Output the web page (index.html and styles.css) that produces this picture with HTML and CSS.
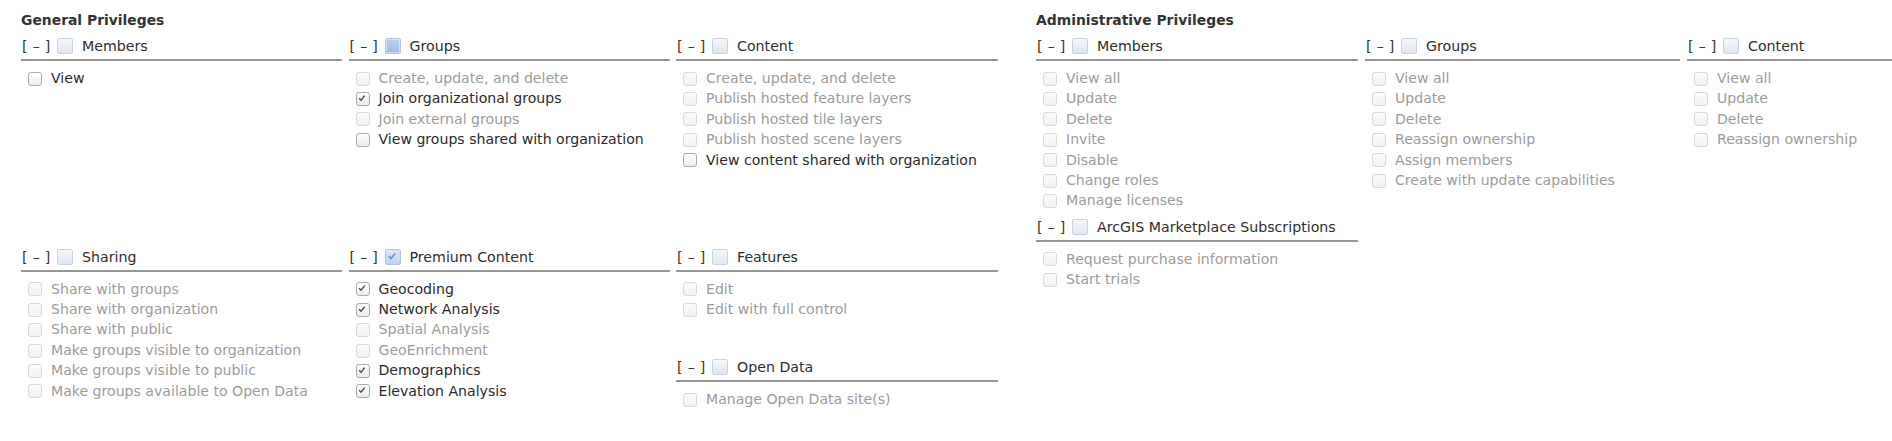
FILE: index.html
```html
<!DOCTYPE html>
<html>
<head>
<meta charset="utf-8">
<link rel="stylesheet" href="styles.css">
</head>
<body>
<div class="page">
  <div class="panel">
    <div class="panel-title">General Privileges</div>
    <div class="grid grid-general">
      <div class="section">
        <div class="sec-head"><span class="toggle">[ – ]</span><span class="hcb"></span><span class="sec-label">Members</span></div>
        <ul class="items">
          <li><span class="cb"></span>View</li>
        </ul>
      </div>
      <div class="section">
        <div class="sec-head"><span class="toggle">[ – ]</span><span class="hcb mixed"></span><span class="sec-label">Groups</span></div>
        <ul class="items">
          <li class="dis"><span class="cb"></span>Create, update, and delete</li>
          <li><span class="cb on"><svg viewBox="0 0 14 14"><path d="M3.6 7.2 L5.9 9.6 L10.2 4.2"/></svg></span>Join organizational groups</li>
          <li class="dis"><span class="cb"></span>Join external groups</li>
          <li><span class="cb"></span>View groups shared with organization</li>
        </ul>
      </div>
      <div class="section">
        <div class="sec-head"><span class="toggle">[ – ]</span><span class="hcb"></span><span class="sec-label">Content</span></div>
        <ul class="items">
          <li class="dis"><span class="cb"></span>Create, update, and delete</li>
          <li class="dis"><span class="cb"></span>Publish hosted feature layers</li>
          <li class="dis"><span class="cb"></span>Publish hosted tile layers</li>
          <li class="dis"><span class="cb"></span>Publish hosted scene layers</li>
          <li><span class="cb"></span>View content shared with organization</li>
        </ul>
      </div>
      <div class="section">
        <div class="sec-head"><span class="toggle">[ – ]</span><span class="hcb"></span><span class="sec-label">Sharing</span></div>
        <ul class="items">
          <li class="dis"><span class="cb"></span>Share with groups</li>
          <li class="dis"><span class="cb"></span>Share with organization</li>
          <li class="dis"><span class="cb"></span>Share with public</li>
          <li class="dis"><span class="cb"></span>Make groups visible to organization</li>
          <li class="dis"><span class="cb"></span>Make groups visible to public</li>
          <li class="dis"><span class="cb"></span>Make groups available to Open Data</li>
        </ul>
      </div>
      <div class="section">
        <div class="sec-head"><span class="toggle">[ – ]</span><span class="hcb on"><svg viewBox="0 0 16 16"><path d="M4.2 8.2 L6.9 10.9 L11.6 5"/></svg></span><span class="sec-label">Premium Content</span></div>
        <ul class="items">
          <li><span class="cb on"><svg viewBox="0 0 14 14"><path d="M3.6 7.2 L5.9 9.6 L10.2 4.2"/></svg></span>Geocoding</li>
          <li><span class="cb on"><svg viewBox="0 0 14 14"><path d="M3.6 7.2 L5.9 9.6 L10.2 4.2"/></svg></span>Network Analysis</li>
          <li class="dis"><span class="cb"></span>Spatial Analysis</li>
          <li class="dis"><span class="cb"></span>GeoEnrichment</li>
          <li><span class="cb on"><svg viewBox="0 0 14 14"><path d="M3.6 7.2 L5.9 9.6 L10.2 4.2"/></svg></span>Demographics</li>
          <li><span class="cb on"><svg viewBox="0 0 14 14"><path d="M3.6 7.2 L5.9 9.6 L10.2 4.2"/></svg></span>Elevation Analysis</li>
        </ul>
      </div>
      <div class="stack">
        <div class="section tall">
          <div class="sec-head"><span class="toggle">[ – ]</span><span class="hcb"></span><span class="sec-label">Features</span></div>
          <ul class="items">
            <li class="dis"><span class="cb"></span>Edit</li>
            <li class="dis"><span class="cb"></span>Edit with full control</li>
          </ul>
        </div>
        <div class="section">
          <div class="sec-head"><span class="toggle">[ – ]</span><span class="hcb"></span><span class="sec-label">Open Data</span></div>
          <ul class="items">
            <li class="dis"><span class="cb"></span>Manage Open Data site(s)</li>
          </ul>
        </div>
      </div>
    </div>
  </div>

  <div class="panel">
    <div class="panel-title">Administrative Privileges</div>
    <div class="grid grid-admin">
      <div class="stack">
        <div class="section">
          <div class="sec-head"><span class="toggle">[ – ]</span><span class="hcb"></span><span class="sec-label">Members</span></div>
          <ul class="items">
            <li class="dis"><span class="cb"></span>View all</li>
            <li class="dis"><span class="cb"></span>Update</li>
            <li class="dis"><span class="cb"></span>Delete</li>
            <li class="dis"><span class="cb"></span>Invite</li>
            <li class="dis"><span class="cb"></span>Disable</li>
            <li class="dis"><span class="cb"></span>Change roles</li>
            <li class="dis"><span class="cb"></span>Manage licenses</li>
          </ul>
        </div>
        <div class="section follow">
          <div class="sec-head"><span class="toggle">[ – ]</span><span class="hcb"></span><span class="sec-label">ArcGIS Marketplace Subscriptions</span></div>
          <ul class="items">
            <li class="dis"><span class="cb"></span>Request purchase information</li>
            <li class="dis"><span class="cb"></span>Start trials</li>
          </ul>
        </div>
      </div>
      <div class="section">
        <div class="sec-head"><span class="toggle">[ – ]</span><span class="hcb"></span><span class="sec-label">Groups</span></div>
        <ul class="items">
          <li class="dis"><span class="cb"></span>View all</li>
          <li class="dis"><span class="cb"></span>Update</li>
          <li class="dis"><span class="cb"></span>Delete</li>
          <li class="dis"><span class="cb"></span>Reassign ownership</li>
          <li class="dis"><span class="cb"></span>Assign members</li>
          <li class="dis"><span class="cb"></span>Create with update capabilities</li>
        </ul>
      </div>
      <div class="section">
        <div class="sec-head"><span class="toggle">[ – ]</span><span class="hcb"></span><span class="sec-label">Content</span></div>
        <ul class="items">
          <li class="dis"><span class="cb"></span>View all</li>
          <li class="dis"><span class="cb"></span>Update</li>
          <li class="dis"><span class="cb"></span>Delete</li>
          <li class="dis"><span class="cb"></span>Reassign ownership</li>
        </ul>
      </div>
    </div>
  </div>
</div>
</body>
</html>
```
FILE: styles.css
```css
* { box-sizing: border-box; }

html, body {
  margin: 0;
  background: #fff;
  overflow: hidden;
}

body {
  font-family: "DejaVu Sans", Verdana, sans-serif;
  color: #333;
}

.page {
  display: flex;
  gap: 38px;
  padding: 11px 0 0 21px;
  width: max-content;
}

.panel-title {
  font-weight: bold;
  font-size: 13.9px;
  line-height: 18px;
  height: 18px;
  margin-bottom: 7px;
  color: #333;
}

.grid { display: grid; align-items: start; }

.grid-general {
  grid-template-columns: 321px 321px 322px;
  grid-template-rows: 210.7px auto;
  column-gap: 6.5px;
}

.grid-admin {
  grid-template-columns: 322px 315px 322px;
  column-gap: 7px;
}

.stack { display: flex; flex-direction: column; }

.section.tall { min-height: 110.6px; }
.section.follow { margin-top: 6px; }

.sec-head {
  display: flex;
  align-items: center;
  height: 25px;
  padding-bottom: 3px;
  border-bottom: 2px solid #979797;
  font-size: 14.2px;
  line-height: 20px;
  color: #2e2e2e;
  white-space: nowrap;
}

.toggle {
  width: 36px;
  padding-left: 1px;
  flex: none;
  color: #3a3530;
  letter-spacing: 0.3px;
}

.hcb {
  width: 16px;
  height: 16px;
  flex: none;
  margin-right: 9px;
  border: 1px solid #c9d2df;
  border-radius: 2px;
  background: linear-gradient(#f5f8fc, #dfe6ef);
  position: relative;
}

.hcb.mixed {
  border-color: #b3c4dc;
  background: linear-gradient(#bcd0ee, #9fbce4);
  box-shadow: inset 0 0 0 1px rgba(255, 255, 255, 0.45);
}

.hcb.on {
  border-color: #b3c4dc;
  background: linear-gradient(#dce7f6, #bfd2ee);
}

.hcb svg, .cb svg {
  position: absolute;
  left: -1px;
  top: -1px;
  width: 100%;
  height: 100%;
  overflow: visible;
}

.hcb svg path {
  fill: none;
  stroke: #6a8cc4;
  stroke-width: 1.8;
}

.items {
  list-style: none;
  margin: 0;
  padding: 7px 0 0 0;
}

.items li {
  display: flex;
  align-items: center;
  height: 20.4px;
  line-height: 20.4px;
  font-size: 14.1px;
  color: #2a2a2a;
  white-space: nowrap;
}

.items li.dis { color: #9c9c9c; }

.cb {
  width: 14px;
  height: 14px;
  flex: none;
  margin: 1px 9px 0 7px;
  border: 1px solid #ababab;
  border-radius: 3px;
  background: linear-gradient(#ffffff, #ececec);
  position: relative;
}

.items li.dis .cb {
  border-color: #d9d9d9;
  background: linear-gradient(#fbfbfb, #f2f2f2);
}

.cb svg path {
  fill: none;
  stroke: #4a4a4a;
  stroke-width: 1.6;
}
```
